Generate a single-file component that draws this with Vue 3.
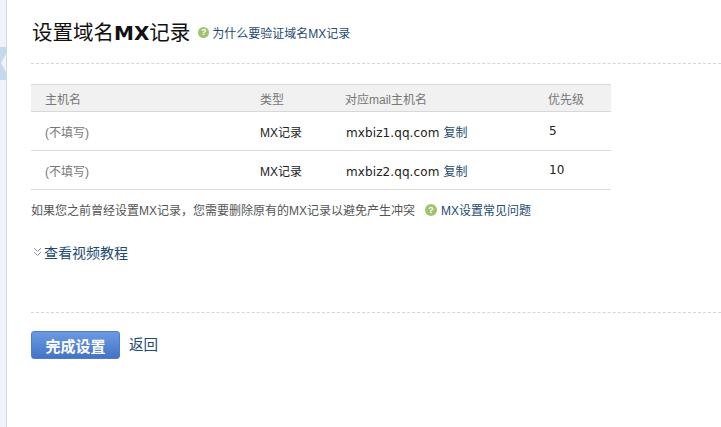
<template>
  <div class="page">
    <div class="side">
      <svg class="side-arrow" width="6" height="33" viewBox="0 0 6 33"><path d="M0 0 H6 V7 L1 16 L6 25 V33 H0 Z" fill="#c3d9ee" /></svg>
    </div>
    <div class="main">
      <div class="head">
        <h1 class="title">设置域名<b>MX</b>记录</h1>
        <span class="help-icon">?</span>
        <a class="link why">为什么要验证域名MX记录</a>
      </div>
      <div class="dash"></div>
      <div class="table">
        <div class="row row-head">
          <div class="c1">主机名</div>
          <div class="c2">类型</div>
          <div class="c3">对应mail主机名</div>
          <div class="c4">优先级</div>
        </div>
        <div v-for="r in rows" :key="r.host" class="row">
          <div class="c1 muted">(不填写)</div>
          <div class="c2">MX记录</div>
          <div class="c3"><span class="host">{{ r.host }}</span><a class="link copy">复制</a></div>
          <div class="c4 prio">{{ r.prio }}</div>
        </div>
      </div>
      <div class="note">
        <span>如果您之前曾经设置MX记录，您需要删除原有的MX记录以避免产生冲突</span>
        <span class="help-icon note-icon">?</span>
        <a class="link">MX设置常见问题</a>
      </div>
      <div class="video">
        <svg width="9" height="10" viewBox="0 0 9 10" fill="none" stroke="#8a97a3"><path d="M1 1 L4.5 4.5 L8 1 M1 5 L4.5 8.5 L8 5" /></svg>
        <a class="link">查看视频教程</a>
      </div>
      <div class="dash dash-low"></div>
      <div class="actions">
        <button class="done">完成设置</button>
        <a class="link back">返回</a>
      </div>
    </div>
  </div>
</template>

<script setup>
const rows = [
  { host: 'mxbiz1.qq.com', prio: 5 },
  { host: 'mxbiz2.qq.com', prio: 10 }
]
</script>

<style>
html, body {
  margin: 0;
  background: #fff;
  overflow: hidden;
}
</style>

<style scoped>
.page {
  display: flex;
  width: 721px;
  height: 427px;
  overflow: hidden;
  font-family: "Liberation Sans", "Noto Sans CJK SC", sans-serif;
  font-size: 12px;
  color: #222;
}

.side {
  flex: none;
  width: 7px;
  height: 427px;
  padding-top: 47px;
  box-sizing: border-box;
  background: #eef4fa;
  border-right: 1px solid #d5d9dd;
}

.side-arrow {
  display: block;
}

.main {
  flex: 1;
  min-width: 0;
  padding-left: 24px;
}

.head {
  display: flex;
  align-items: center;
  height: 63px;
  padding: 0 0 2px 1px;
  box-sizing: border-box;
}

.title {
  margin: 0 7px 0 0;
  font-size: 20.5px;
  font-weight: normal;
  color: #111;
}

.title b {
  font-family: "DejaVu Sans", sans-serif;
  font-size: 20px;
  font-weight: bold;
}

.help-icon {
  display: inline-block;
  flex: none;
  width: 11px;
  height: 11px;
  border-radius: 50%;
  background: #9fc46e;
  color: #fff;
  font-size: 9px;
  font-weight: bold;
  line-height: 11px;
  text-align: center;
}

.head .help-icon {
  margin: 4px 0 0 1px;
}

.link {
  color: #1d4a73;
  cursor: pointer;
}

.why {
  margin: 4px 0 0 3px;
}

.dash {
  height: 0;
  border-top: 1px dashed #d6d6d6;
}

.table {
  width: 580px;
  margin-top: 20px;
}

.row {
  display: flex;
  align-items: center;
  height: 39px;
  border-bottom: 1px solid #dcdcdc;
  box-sizing: border-box;
}

.row-head {
  height: 28px;
  background: #f1f1f1;
  border-top: 1px solid #d8d8d8;
  border-bottom: 1px solid #d8d8d8;
  color: #777;
}

.c1 {
  width: 229px;
  padding-left: 14px;
  box-sizing: border-box;
}

.c2 {
  width: 85px;
}

.c3 {
  width: 203px;
}

.host {
  margin-left: 1px;
  font-family: "DejaVu Sans", sans-serif;
  font-size: 12px;
  letter-spacing: 0.1px;
}

.copy {
  margin-left: 4px;
}

.muted {
  color: #777;
}

.prio {
  font-family: "DejaVu Sans", sans-serif;
  padding-left: 1px;
}

.note {
  display: flex;
  align-items: center;
  margin-top: 11px;
  color: #555;
}

.note-icon {
  margin: 0 4px 0 10px;
  width: 12px;
  height: 12px;
  line-height: 12px;
}

.video {
  display: flex;
  align-items: center;
  gap: 2px;
  margin-top: 24px;
  padding-left: 2px;
  font-size: 14px;
}

.dash-low {
  margin-top: 50px;
}

.actions {
  display: flex;
  align-items: center;
  margin-top: 18px;
}

.done {
  width: 89px;
  height: 28px;
  padding: 0;
  border: 1px solid #4d7cc9;
  border-radius: 3px;
  background: linear-gradient(#6b9ae3, #4473c6);
  color: #fff;
  font: bold 15px "Liberation Sans", "Noto Sans CJK SC", sans-serif;
}

.back {
  margin: -4px 0 0 9px;
  font-size: 14.5px;
}
</style>
